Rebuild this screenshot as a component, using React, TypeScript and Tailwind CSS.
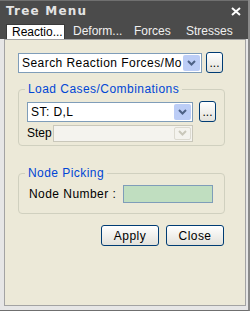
import React from "react";

const font = { fontFamily: '"Liberation Sans", Arial, sans-serif', letterSpacing: "0.45px" };

function Chevron({ color }: { color: string }) {
  return (
    <svg width="9" height="6" viewBox="0 0 9 6">
      <path d="M1 1 L4.5 4.5 L8 1" fill="none" stroke={color} strokeWidth="2" />
    </svg>
  );
}

function Select({ text, width, height = "h-[20px]", disabled = false }: { text?: string; width: string; height?: string; disabled?: boolean }) {
  return (
    <div
      className={`${width} ${height} flex items-stretch border ${
        disabled ? "border-[#c9c7ba] bg-[#f4f3ee]" : "border-[#7f9db9] bg-white"
      }`}
    >
      <div className="flex-1 pl-[3px] text-[12px] leading-[18px] text-black whitespace-nowrap overflow-hidden">
        {text}
      </div>
      <div
        className={`w-[17px] m-[1px] flex items-center justify-center rounded-[2px] ${
          disabled ? "bg-[#f4f3ee] border border-[#dcdad0]" : "bg-[#bccdf6]"
        }`}
      >
        <Chevron color={disabled ? "#c9c7ba" : "#4d6185"} />
      </div>
    </div>
  );
}

function DotsButton() {
  return (
    <button className="w-[17px] h-[21px] border border-[#003c74] rounded-[3px] bg-gradient-to-b from-white to-[#e3e2db] text-[12px] leading-[14px] text-black flex items-end justify-center pb-[2px] tracking-normal">
      ...
    </button>
  );
}

function Group({ title, className, children }: { title: string; className: string; children: React.ReactNode }) {
  return (
    <fieldset className={`ml-[13px] w-[207px] border border-[#d0d0bf] rounded-[4px] ${className}`}>
      <legend className="ml-[6px] px-[3px] text-[12px] leading-[14px] text-[#0046d5]">{title}</legend>
      {children}
    </fieldset>
  );
}

function WinButton({ label }: { label: string }) {
  return (
    <button className="w-[58px] h-[21px] border border-[#003c74] rounded-[3px] bg-gradient-to-b from-white to-[#e3e2db] text-[12px] text-black">
      {label}
    </button>
  );
}

export default function App() {
  return (
    <div
      className="w-[250px] h-[311px] flex flex-col bg-[#e6e6e6] border-r-2 border-b border-r-[#8a8a8a] border-b-[#6f6f6f]"
      style={font}
    >
      {/* Title bar */}
      <div className="h-[21px] bg-[#4b4b4b] border-t border-[#707070] flex items-center justify-between pl-[6px] pr-[7px]">
        <span
          className="font-bold text-[#e4e4e4]"
          style={{ fontFamily: '"DejaVu Sans", sans-serif', fontSize: 12, letterSpacing: "1.2px" }}
        >
          Tree Menu
        </span>
        <svg width="10" height="9" viewBox="0 0 10 9">
          <path d="M1 1 L9 8 M9 1 L1 8" stroke="#ffffff" strokeWidth="2" />
        </svg>
      </div>

      {/* Tabs */}
      <div className="h-[18px] bg-[#4b4b4b] flex items-end pl-[6px] tracking-normal">
        <div className="w-[59px] h-[15px] bg-white border border-b-0 border-[#3a3a3a] text-[12px] leading-[14px] text-black pl-[5px] whitespace-nowrap">
          Reactio...
        </div>
        <div className="flex text-[12px] leading-[16px] text-[#f0f0f0] h-[16px] pl-[8px] whitespace-nowrap">
          <span className="w-[61px]">Deform...</span>
          <span className="w-[52px]">Forces</span>
          <span>Stresses</span>
        </div>
      </div>

      {/* Body */}
      <div className="flex-1 pl-[4px] pb-[4px] pr-[2px]">
        <div className="h-full border border-[#a3a3a3] bg-[#ece9d8] flex flex-col">
          <div className="mt-[12px] ml-[13px] flex items-center gap-[4px]">
            <Select text="Search Reaction Forces/Mo" width="w-[184px]" />
            <DotsButton />
          </div>

          <Group title="Load Cases/Combinations" className="mt-[9px] h-[64px]">
            <div className="pl-[8px]">
              <div className="mt-[5px] flex items-center gap-[6px]">
                <Select text="ST: D,L" width="w-[166px]" />
                <DotsButton />
              </div>
              <div className="mt-[2px] flex items-center">
                <span className="w-[26px] text-[12px] text-black tracking-normal">Step</span>
                <Select width="w-[140px]" height="h-[17px]" disabled />
              </div>
            </div>
          </Group>

          <Group title="Node Picking" className="mt-[20px] h-[48px]">
            <div className="pl-[10px] mt-[5px] flex items-center">
              <span className="w-[94px] text-[12px] text-black">Node Number :</span>
              <div className="w-[90px] h-[18px] border border-[#7f9db9] bg-[#c0dec0]" />
            </div>
          </Group>

          <div className="mt-[11px] ml-[96px] flex gap-[7px]">
            <WinButton label="Apply" />
            <WinButton label="Close" />
          </div>
        </div>
      </div>
    </div>
  );
}
